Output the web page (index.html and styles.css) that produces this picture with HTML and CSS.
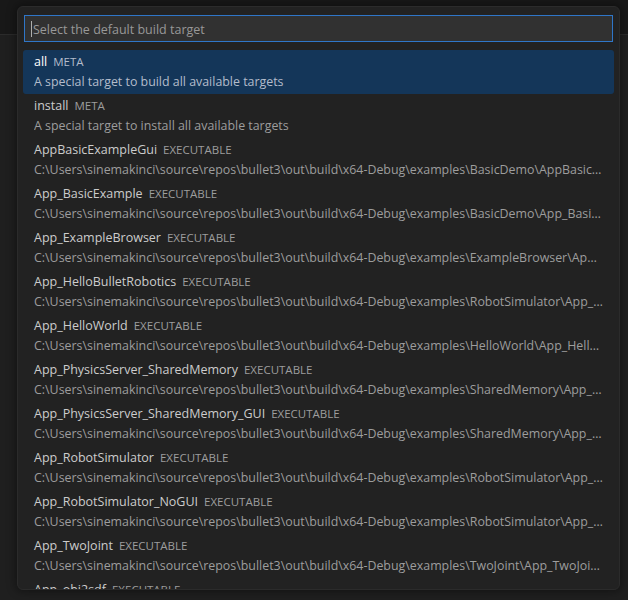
FILE: index.html
```html
<!DOCTYPE html>
<html>
<head>
<meta charset="utf-8">
<link rel="stylesheet" href="styles.css">
</head>
<body>
<div class="titlebar"></div>
<div class="editor"></div>
<div class="quick-pick">
  <div class="input"><span class="caret"></span><span class="placeholder">Select the default build target</span></div>
  <div class="list">
    <div class="row selected"><div class="label"><span class="name">all</span><span class="desc">META</span></div><div class="detail">A special target to build all available targets</div></div>
    <div class="row"><div class="label"><span class="name">install</span><span class="desc">META</span></div><div class="detail">A special target to install all available targets</div></div>
    <div class="row"><div class="label"><span class="name">AppBasicExampleGui</span><span class="desc">EXECUTABLE</span></div><div class="detail">C:\Users\sinemakinci\source\repos\bullet3\out\build\x64-Debug\examples\BasicDemo\AppBasicExampleGui.exe</div></div>
    <div class="row"><div class="label"><span class="name">App_BasicExample</span><span class="desc">EXECUTABLE</span></div><div class="detail">C:\Users\sinemakinci\source\repos\bullet3\out\build\x64-Debug\examples\BasicDemo\App_BasicExample.exe</div></div>
    <div class="row"><div class="label"><span class="name">App_ExampleBrowser</span><span class="desc">EXECUTABLE</span></div><div class="detail">C:\Users\sinemakinci\source\repos\bullet3\out\build\x64-Debug\examples\ExampleBrowser\App_ExampleBrowser.exe</div></div>
    <div class="row"><div class="label"><span class="name">App_HelloBulletRobotics</span><span class="desc">EXECUTABLE</span></div><div class="detail">C:\Users\sinemakinci\source\repos\bullet3\out\build\x64-Debug\examples\RobotSimulator\App_HelloBulletRobotics.exe</div></div>
    <div class="row"><div class="label"><span class="name">App_HelloWorld</span><span class="desc">EXECUTABLE</span></div><div class="detail">C:\Users\sinemakinci\source\repos\bullet3\out\build\x64-Debug\examples\HelloWorld\App_HelloWorld.exe</div></div>
    <div class="row"><div class="label"><span class="name">App_PhysicsServer_SharedMemory</span><span class="desc">EXECUTABLE</span></div><div class="detail">C:\Users\sinemakinci\source\repos\bullet3\out\build\x64-Debug\examples\SharedMemory\App_PhysicsServer_SharedMemory.exe</div></div>
    <div class="row"><div class="label"><span class="name">App_PhysicsServer_SharedMemory_GUI</span><span class="desc">EXECUTABLE</span></div><div class="detail">C:\Users\sinemakinci\source\repos\bullet3\out\build\x64-Debug\examples\SharedMemory\App_PhysicsServer_SharedMemory_GUI.exe</div></div>
    <div class="row"><div class="label"><span class="name">App_RobotSimulator</span><span class="desc">EXECUTABLE</span></div><div class="detail">C:\Users\sinemakinci\source\repos\bullet3\out\build\x64-Debug\examples\RobotSimulator\App_RobotSimulator.exe</div></div>
    <div class="row"><div class="label"><span class="name">App_RobotSimulator_NoGUI</span><span class="desc">EXECUTABLE</span></div><div class="detail">C:\Users\sinemakinci\source\repos\bullet3\out\build\x64-Debug\examples\RobotSimulator\App_RobotSimulator_NoGUI.exe</div></div>
    <div class="row"><div class="label"><span class="name">App_TwoJoint</span><span class="desc">EXECUTABLE</span></div><div class="detail">C:\Users\sinemakinci\source\repos\bullet3\out\build\x64-Debug\examples\TwoJoint\App_TwoJoint.exe</div></div>
    <div class="row"><div class="label"><span class="name">App_obj2sdf</span><span class="desc">EXECUTABLE</span></div><div class="detail">C:\Users\sinemakinci\source\repos\bullet3\out\build\x64-Debug\examples\obj2sdf\App_obj2sdf.exe</div></div>
  </div>
</div>
</body>
</html>
```

FILE: styles.css
```css
html, body {
  margin: 0;
  padding: 0;
  height: 100%;
  overflow: hidden;
  background: #1f1f1f;
  font-family: "Open Sans", "Noto Sans", sans-serif;
  font-size: 12px;
  color: #cccccc;
}

.titlebar {
  height: 34px;
  background: #181818;
  border-bottom: 1px solid #2b2b2b;
}

.editor {
  height: 565px;
  background: #1f1f1f;
}

.quick-pick {
  position: absolute;
  left: 17px;
  top: 6px;
  width: 603px;
  height: 584px;
  box-sizing: border-box;
  background: #222222;
  border: 1px solid #2b2b2b;
  border-radius: 6px;
  box-shadow: 0 0 8px 2px rgba(0, 0, 0, 0.36);
  padding: 8px 6px 0 6px;
  display: flex;
  flex-direction: column;
  overflow: hidden;
}

.input {
  height: 27px;
  box-sizing: border-box;
  background: #313131;
  border: 1px solid #2f76c8;
  display: flex;
  align-items: center;
  padding-left: 6px;
  flex: none;
}

.caret {
  width: 1px;
  height: 16px;
  background: #aeafad;
  margin-right: 1px;
}

.placeholder {
  color: #989898;
  font-size: 12.5px;
  padding-top: 2px;
}

.list {
  margin: 8px -1px 0 -1px;
  flex: 1;
  overflow: hidden;
}

.row {
  height: 44px;
  padding: 0 11px;
  border-radius: 3px;
  display: flex;
  flex-direction: column;
}

.row.selected {
  background: #143659;
}

.label {
  height: 21px;
  padding-top: 1px;
  line-height: 22px;
  white-space: nowrap;
  font-size: 12.5px;
}

.name {
  color: #cccccc;
}

.selected .name {
  color: #ffffff;
}

.desc {
  color: #9d9d9d;
  font-size: 11.5px;
  margin-left: 6px;
}

.selected .desc {
  color: #b3bccb;
}

.detail {
  height: 20px;
  line-height: 20px;
  color: #9d9d9d;
  font-size: 12.4px;
  white-space: nowrap;
  overflow: hidden;
  text-overflow: ellipsis;
}

.selected .detail {
  color: #b3bccb;
}
```
